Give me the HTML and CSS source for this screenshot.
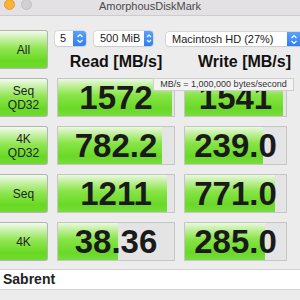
FILE: index.html
```html
<!DOCTYPE html>
<html lang="en">
<head>
    <meta charset="UTF-8">
    <title>AmorphousDiskMark</title>
    <link rel="stylesheet" href="styles.css">
</head>
<body>

    <div class="titlebar">
        <div class="lights">
            <span class="light close"></span>
            <span class="light min"></span>
        </div>
        <span class="title">AmorphousDiskMark</span>
        <span></span>
    </div>

    <div class="bench">
        <div class="label-btn all">All</div>
        <div class="head">
            <div class="controls">
                <div class="field count">
                    <span class="field-text">5</span>
                    <span class="stepper">
                        <svg width="8" height="11" viewBox="0 0 8 11"><path d="M1.5 4 L4 1.5 L6.5 4 M1.5 7 L4 9.5 L6.5 7" fill="none" stroke="#fff" stroke-width="1.2"/></svg>
                    </span>
                </div>
                <div class="field size">
                    <span class="field-text">500 MiB</span>
                    <span class="stepper narrow">
                        <svg width="6" height="11" viewBox="0 0 6 11"><path d="M1 4 L3 2 L5 4 M1 7 L3 9 L5 7" fill="none" stroke="#fff" stroke-width="1.1"/></svg>
                    </span>
                </div>
                <div class="field drive-select">
                    <span class="field-text">Macintosh HD (27%)</span>
                    <span class="stepper">
                        <svg width="8" height="11" viewBox="0 0 8 11"><path d="M1.5 4 L4 1.5 L6.5 4 M1.5 7 L4 9.5 L6.5 7" fill="none" stroke="#fff" stroke-width="1.2"/></svg>
                    </span>
                </div>
            </div>
            <div class="heads">
                <div class="heading">Read [MB/s]</div>
                <div class="heading write">Write [MB/s]</div>
            </div>
        </div>

        <div class="label-btn">Seq<br>QD32</div>
        <div class="box"><div class="fill" style="width: 98%"></div><div class="value">1572</div></div>
        <div class="box"><div class="fill" style="width: 97%"></div><div class="value">1541</div></div>
        <div></div>

        <div class="label-btn">4K<br>QD32</div>
        <div class="box"><div class="fill" style="width: 90%"></div><div class="value">782.2</div></div>
        <div class="box"><div class="fill" style="width: 77%"></div><div class="value">239.0</div></div>
        <div></div>

        <div class="label-btn">Seq</div>
        <div class="box"><div class="fill" style="width: 94%"></div><div class="value">1211</div></div>
        <div class="box"><div class="fill" style="width: 89%"></div><div class="value">771.0</div></div>
        <div></div>

        <div class="label-btn">4K</div>
        <div class="box"><div class="fill" style="width: 52%"></div><div class="value">38.36</div></div>
        <div class="box"><div class="fill" style="width: 79%"></div><div class="value">285.0</div></div>
        <div></div>
    </div>

    <div class="drive">Sabrent</div>

    <div class="tooltip">MB/s = 1,000,000 bytes/second</div>

</body>
</html>
```

FILE: styles.css
```css
body {
    margin: 0;
    width: 300px;
    height: 300px;
    overflow: hidden;
    background-color: #ececec;
    font-family: "Liberation Sans", Arial, sans-serif;
    color: #1c1c1c;
    position: relative;
}

.titlebar {
    height: 15px;
    display: grid;
    grid-template-columns: 1fr auto 1fr;
    align-items: start;
    background-color: #e3e1e3;
    border-bottom: 1px solid #cdcbcd;
}

.lights {
    display: flex;
    gap: 6px;
    padding-left: 4px;
    margin-top: -1px;
}

.light {
    width: 11px;
    height: 11px;
    border-radius: 50%;
}

.close {
    background-color: #fbb33a;
    border: 1px solid #e29d2a;
    box-sizing: border-box;
}

.min {
    background-color: #d2d0d2;
    border: 1px solid #c2c0c2;
    box-sizing: border-box;
}

.title {
    font-size: 11px;
    line-height: 13px;
    color: #4a4a4a;
}

.bench {
    display: grid;
    grid-template-columns: 48px 118px 103px 1fr;
    grid-template-rows: repeat(5, 39px);
    column-gap: 9px;
    row-gap: 9px;
    padding-top: 14px;
}

.label-btn {
    display: flex;
    align-items: center;
    justify-content: center;
    text-align: center;
    font-size: 12px;
    line-height: 14px;
    color: #222;
    border: 1px solid #b4b4b4;
    border-left: none;
    border-radius: 0 3px 3px 0;
    background: linear-gradient(to bottom, #f3fbee 0%, #c4f0a2 22%, #8fe650 48%, #68d923 80%, #72db33 100%);
}

.head {
    grid-column: 2 / -1;
    min-width: 0;
}

.controls {
    display: flex;
    margin-left: -2px;
    margin-top: 1px;
    height: 15px;
}

.field {
    display: flex;
    background-color: #fff;
    border-radius: 3px;
    box-shadow: 0 0 0 0.5px #c4c4c4, 0 1px 1px rgba(0, 0, 0, 0.1);
    overflow: hidden;
    flex-shrink: 0;
}

.field-text {
    flex: 1;
    font-size: 11px;
    line-height: 15px;
    color: #222;
    white-space: nowrap;
}

.stepper {
    width: 13px;
    flex-shrink: 0;
    display: flex;
    align-items: center;
    justify-content: center;
    background: linear-gradient(to bottom, #5aa2fb, #2f7ef5);
}

.stepper.narrow {
    width: 9px;
}

.count {
    width: 31px;
}

.count .field-text {
    padding-left: 5px;
}

.size {
    width: 59px;
    margin-left: 8px;
}

.size .field-text {
    padding-left: 6px;
}

.drive-select {
    flex: 1 1 auto;
    margin-left: 13px;
    margin-top: 1px;
    border-radius: 3px 0 0 3px;
}

.drive-select .field-text {
    padding-left: 6px;
}

.heads {
    display: grid;
    grid-template-columns: 118px 103px;
    column-gap: 9px;
    margin-top: 6px;
}

.heading {
    font-size: 16px;
    font-weight: bold;
    line-height: 20px;
    text-align: center;
    white-space: nowrap;
    color: #111;
}

.heading.write {
    padding-left: 14px;
}

.box {
    display: grid;
    border: 1px solid #c6c6c6;
    background-color: #e4e4e4;
}

.fill, .value {
    grid-area: 1 / 1;
}

.fill {
    height: 100%;
    background: linear-gradient(to bottom, #eaf8e0 0%, #b8ee8e 22%, #86e444 45%, #6ad827 80%, #7adc40 100%);
}

.value {
    align-self: center;
    text-align: center;
    font-size: 33px;
    font-weight: bold;
    line-height: 37px;
    color: #1a1a1a;
    white-space: nowrap;
}

.drive {
    margin-top: 8px;
    height: 21px;
    box-sizing: border-box;
    background-color: #fff;
    border-top: 1px solid #d4d4d4;
    border-bottom: 1px solid #d4d4d4;
    padding-left: 3px;
    font-size: 14px;
    font-weight: bold;
    line-height: 19px;
    color: #222;
}

.tooltip {
    position: absolute;
    left: 153px;
    top: 78px;
    width: 141px;
    height: 13px;
    box-sizing: border-box;
    background-color: #f3f3f3;
    border: 1px solid #cfcfcf;
    font-size: 9px;
    line-height: 11px;
    text-align: center;
    color: #333;
    white-space: nowrap;
}
```
